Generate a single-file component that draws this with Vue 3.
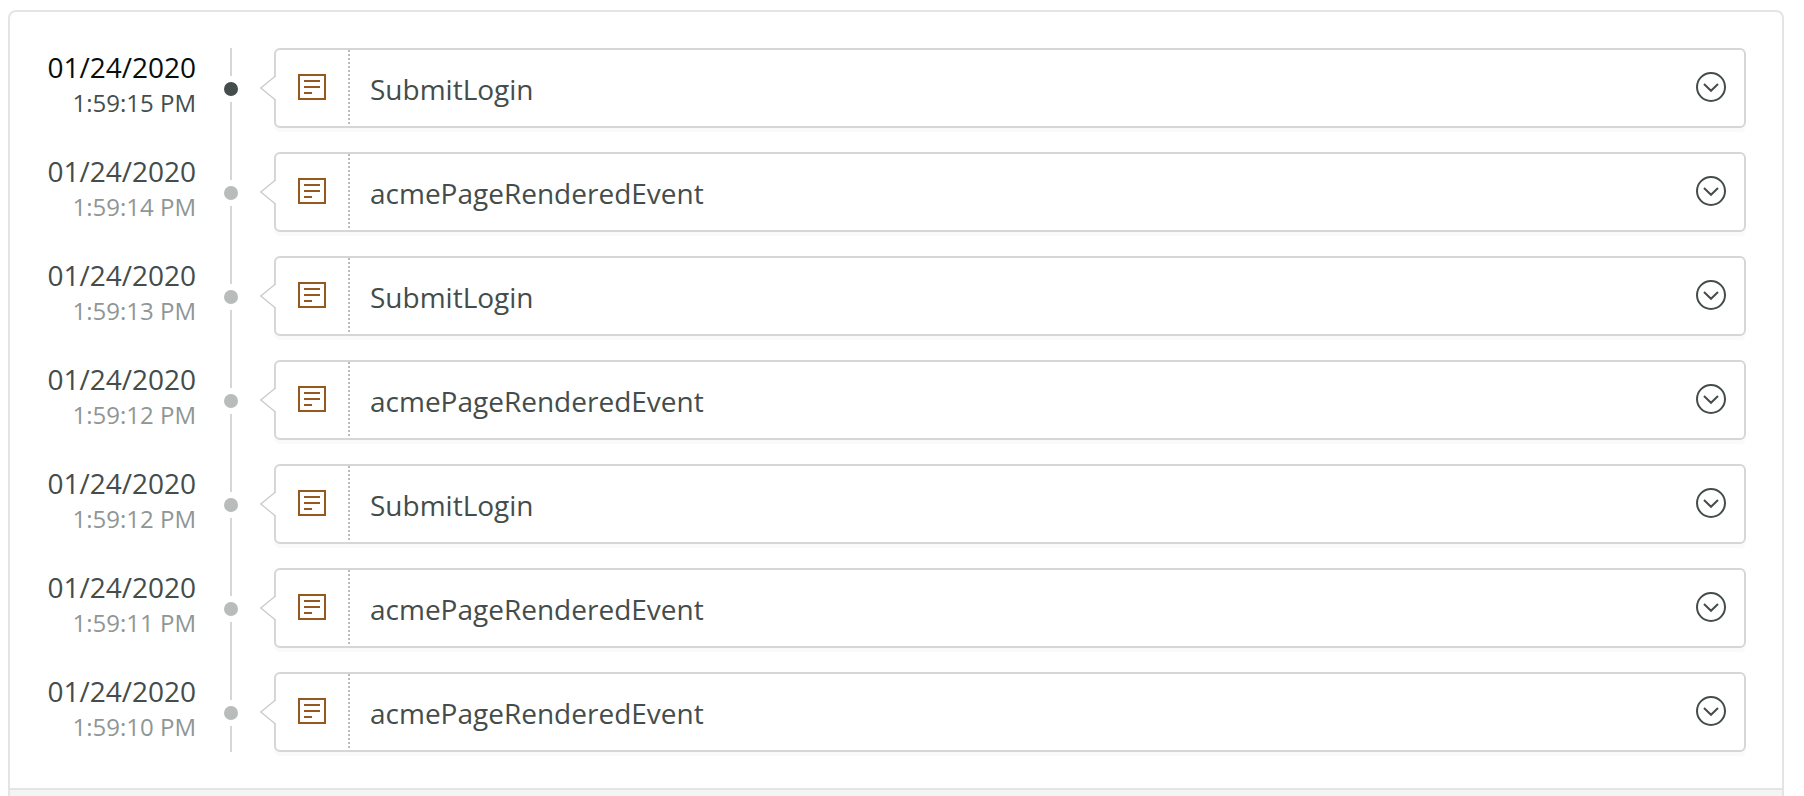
<script setup>
import { ref } from 'vue'

const events = [
  { time: '1:59:15 PM', name: 'SubmitLogin' },
  { time: '1:59:14 PM', name: 'acmePageRenderedEvent' },
  { time: '1:59:13 PM', name: 'SubmitLogin' },
  { time: '1:59:12 PM', name: 'acmePageRenderedEvent' },
  { time: '1:59:12 PM', name: 'SubmitLogin' },
  { time: '1:59:11 PM', name: 'acmePageRenderedEvent' },
  { time: '1:59:10 PM', name: 'acmePageRenderedEvent' },
].map((event) => ({ ...event, date: '01/24/2020' }))

const active = ref(0)
</script>

<template>
  <main class="page">
    <section class="panel">
      <ol class="timeline">
        <li
          v-for="(event, index) in events"
          :key="index"
          class="entry"
          :class="{ active: index === active }"
        >
          <div class="stamp">
            <span class="date">{{ event.date }}</span>
            <span class="time">{{ event.time }}</span>
          </div>
          <div class="rail">
            <span class="segment lead"></span>
            <span class="dot"></span>
            <span class="segment tail"></span>
          </div>
          <article class="card">
            <svg class="pointer" width="16" height="24" viewBox="0 0 16 24" aria-hidden="true">
              <path d="M16 0 0.8 12 16 24z" fill="#fff" />
              <path d="M15.5 0 0.8 12 15.5 24" fill="none" stroke="#c9cbcb" stroke-width="1.3" />
            </svg>
            <div class="kind">
              <svg width="28" height="26" viewBox="0 0 28 26" fill="none" stroke="#96591d" stroke-width="2" aria-hidden="true">
                <path d="M1 1h26v24H1zM6 7h16M6 13h16M6 19h8" />
              </svg>
            </div>
            <span class="name">{{ event.name }}</span>
            <button class="expand" type="button" :aria-label="event.name" @click="active = index">
              <svg width="30" height="30" viewBox="0 0 30 30" fill="none" stroke="#444d4b" stroke-width="2" aria-hidden="true">
                <circle cx="15" cy="15" r="14" />
                <path d="M8 12l7 6.8 7-6.8" />
              </svg>
            </button>
          </article>
        </li>
      </ol>
      <footer class="footer"></footer>
    </section>
  </main>
</template>

<style>
body {
  background: #fff;
}
</style>

<style scoped>
.page {
  box-sizing: border-box;
  display: flex;
  min-height: 100vh;
  padding: 10px 20px 0 8px;
  font-family: "Open Sans", "Noto Sans", sans-serif;
  color: #444d4b;
}

.panel {
  flex: 1;
  display: flex;
  flex-direction: column;
  min-width: 0;
  border: 2px solid #e3e4e4;
  border-bottom: 0;
  border-radius: 8px 8px 0 0;
}

.timeline {
  margin: 0;
  padding: 36px;
  list-style: none;
}

.entry {
  display: grid;
  grid-template-columns: 150px 70px minmax(0, 1fr);
}

.entry:not(:last-child) .rail {
  height: 104px;
}

.stamp {
  display: flex;
  flex-direction: column;
  text-align: right;
  white-space: nowrap;
}

.date {
  font-size: 28px;
  line-height: 38px;
}

.time {
  font-size: 24px;
  line-height: 34px;
  color: #8f9695;
}

.active .date {
  color: #060d0c;
}

.active .time {
  color: #444d4b;
}

.rail {
  display: flex;
  flex-direction: column;
  align-items: center;
  gap: 6px;
  height: 80px;
}

.segment {
  width: 2px;
  background: #d5d6d6;
}

.lead {
  height: 28px;
}

.tail {
  flex: 1;
}

.dot {
  width: 14px;
  height: 14px;
  border-radius: 50%;
  background: #b8bcbb;
}

.active .dot {
  background: #444d4b;
}

.card {
  position: relative;
  box-sizing: border-box;
  display: flex;
  align-items: center;
  height: 80px;
  margin-left: 8px;
  border: 2px solid #d5d6d6;
  border-radius: 6px;
  background: #fff;
  box-shadow: 0 4px 0 #fafafa;
}

.pointer {
  position: absolute;
  top: 26px;
  left: -16px;
}

.kind {
  box-sizing: border-box;
  align-self: stretch;
  display: flex;
  align-items: center;
  justify-content: center;
  width: 74px;
  padding: 0 2px 2px 0;
  background: repeating-linear-gradient(#b8bcbb 0 2px, transparent 2px 4px) right / 2px 100% no-repeat;
}

.name {
  flex: 1;
  min-width: 0;
  padding: 2px 0 0 20px;
  font-size: 28px;
  line-height: 38px;
}

.expand {
  display: flex;
  margin: 0 18px 2px 0;
  padding: 0;
  border: 0;
  border-radius: 50%;
  background: none;
  cursor: pointer;
}

.footer {
  flex: 1;
  border-top: 2px solid #e3e4e4;
  background: #f3f5f4;
}
</style>
